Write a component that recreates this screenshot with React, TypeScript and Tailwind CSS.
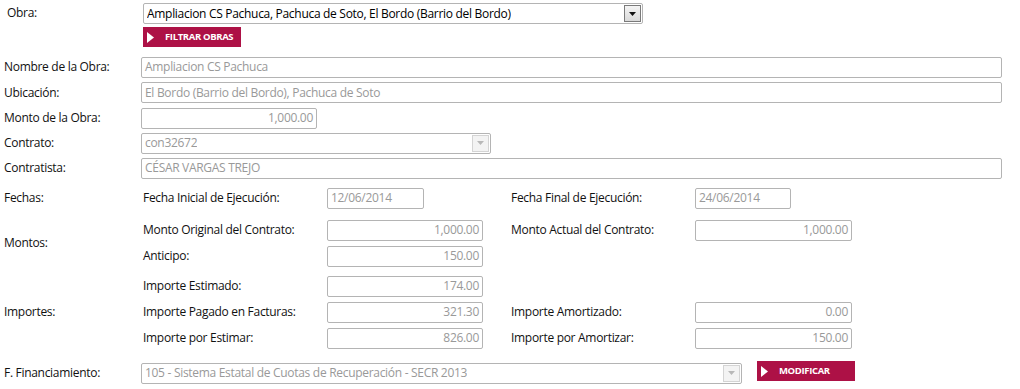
import React from 'react';

const font = { fontFamily: '"Open Sans", "Noto Sans", sans-serif' };

function Field({ value, right, className }: { value: string; right?: boolean; className: string }) {
  return (
    <div
      className={`flex h-[21px] items-center whitespace-nowrap rounded-[2px] border border-[#b4b4b4] bg-white px-[3px] text-[#999] ${
        right ? 'justify-end' : ''
      } ${className}`}
    >
      {value}
    </div>
  );
}

function Arrow({ disabled }: { disabled?: boolean }) {
  return (
    <div
      className={`flex h-full w-[17px] items-center justify-center border ${
        disabled ? 'border-[#d4d4d4] bg-[#f3f3f3]' : 'border-[#7a7a7a] bg-gradient-to-b from-[#f4f4f4] to-[#d9d9d9]'
      }`}
    >
      <svg width="7" height="4" viewBox="0 0 7 4">
        <path d="M0 0h7L3.5 4z" fill={disabled ? '#b8b8b8' : '#111'} />
      </svg>
    </div>
  );
}

function Select({ value, disabled, className }: { value: string; disabled?: boolean; className: string }) {
  return (
    <div
      className={`flex h-[21px] items-center justify-between rounded-[2px] border border-[#b4b4b4] bg-white py-[1px] pl-[3px] pr-[1px] ${
        disabled ? 'text-[#999]' : 'text-black'
      } ${className}`}
    >
      <span className="truncate">{value}</span>
      <Arrow disabled={disabled} />
    </div>
  );
}

function RedButton({ label }: { label: string }) {
  return (
    <button className="flex h-[20px] w-[98px] items-center whitespace-nowrap bg-[#ad1146] pl-[4px] text-[9.5px] font-bold tracking-[-0.35px] text-white">
      <svg width="7" height="11" viewBox="0 0 7 11" className="mr-[11px] shrink-0">
        <path d="M0 0l7 5.5-7 5.5z" fill="#fff" />
      </svg>
      {label}
    </button>
  );
}

function Row({ label, h, children }: { label: string; h: string; children: React.ReactNode }) {
  return (
    <div className={`flex items-center ${h}`}>
      <div className="w-[141px] pl-[4px]">{label}</div>
      {children}
    </div>
  );
}

function Pair({
  a,
  av,
  aw,
  b,
  bv,
  bw,
  right,
  h,
}: {
  a: string;
  av: string;
  aw: string;
  b?: string;
  bv?: string;
  bw?: string;
  right?: boolean;
  h: string;
}) {
  return (
    <div className={`flex items-center ${h}`}>
      <div className="w-[186px] pl-[2px]">{a}</div>
      <div className="w-[184px]">
        <Field value={av} right={right} className={aw} />
      </div>
      {b && (
        <>
          <div className="w-[184px]">{b}</div>
          <Field value={bv ?? ''} right={right} className={bw ?? ''} />
        </>
      )}
    </div>
  );
}

export default function App() {
  return (
    <div
      className="h-[389px] w-[1020px] bg-white pt-[3px] text-[12px] tracking-[-0.3px] text-[#111]"
      style={font}
    >
      <div className="flex items-start">
        <div className="w-[143px] pl-[7px] pt-[1px]">Obra:</div>
        <div className="flex flex-col gap-[3px]">
          <Select value="Ampliacion CS Pachuca, Pachuca de Soto, El Bordo (Barrio del Bordo)" className="w-[500px]" />
          <RedButton label="FILTRAR OBRAS" />
        </div>
      </div>

      <div className="mt-[7px]">
        <Row label="Nombre de la Obra:" h="h-[26px]">
          <Field value="Ampliacion CS Pachuca" className="w-[861px]" />
        </Row>
        <Row label="Ubicación:" h="h-[25px]">
          <Field value="El Bordo (Barrio del Bordo), Pachuca de Soto" className="w-[861px]" />
        </Row>
        <Row label="Monto de la Obra:" h="h-[26px]">
          <Field value="1,000.00" right className="w-[176px]" />
        </Row>
        <Row label="Contrato:" h="h-[24px]">
          <Select value="con32672" disabled className="w-[350px]" />
        </Row>
        <Row label="Contratista:" h="h-[26px]">
          <Field value="CÉSAR VARGAS TREJO" className="w-[861px]" />
        </Row>
      </div>

      <div className="mt-[4px]">
        <Row label="Fechas:" h="h-[26px]">
          <Pair
            h="h-[26px]"
            a="Fecha Inicial de Ejecución:"
            av="12/06/2014"
            aw="w-[97px]"
            b="Fecha Final de Ejecución:"
            bv="24/06/2014"
            bw="w-[96px]"
          />
        </Row>

        <div className="mt-[6px] flex items-center">
          <div className="w-[141px] pl-[4px]">Montos:</div>
          <div>
            <Pair
              h="h-[26px]"
              right
              a="Monto Original del Contrato:"
              av="1,000.00"
              aw="w-[156px]"
              b="Monto Actual del Contrato:"
              bv="1,000.00"
              bw="w-[157px]"
            />
            <Pair h="h-[26px]" right a="Anticipo:" av="150.00" aw="w-[156px]" />
          </div>
        </div>

        <div className="mt-[4px] flex items-center">
          <div className="w-[141px] pl-[4px]">Importes:</div>
          <div>
            <Pair h="h-[26px]" right a="Importe Estimado:" av="174.00" aw="w-[156px]" />
            <Pair
              h="h-[26px]"
              right
              a="Importe Pagado en Facturas:"
              av="321.30"
              aw="w-[156px]"
              b="Importe Amortizado:"
              bv="0.00"
              bw="w-[157px]"
            />
            <Pair
              h="h-[26px]"
              right
              a="Importe por Estimar:"
              av="826.00"
              aw="w-[156px]"
              b="Importe por Amortizar:"
              bv="150.00"
              bw="w-[157px]"
            />
          </div>
        </div>

        <div className="mt-[9px] flex h-[26px] items-center">
          <div className="w-[141px] pl-[4px]">F. Financiamiento:</div>
          <Select
            value="105 - Sistema Estatal de Cuotas de Recuperación - SECR 2013"
            disabled
            className="w-[601px]"
          />
          <div className="-mt-[4px] ml-[15px]">
            <RedButton label="MODIFICAR" />
          </div>
        </div>
      </div>
    </div>
  );
}
